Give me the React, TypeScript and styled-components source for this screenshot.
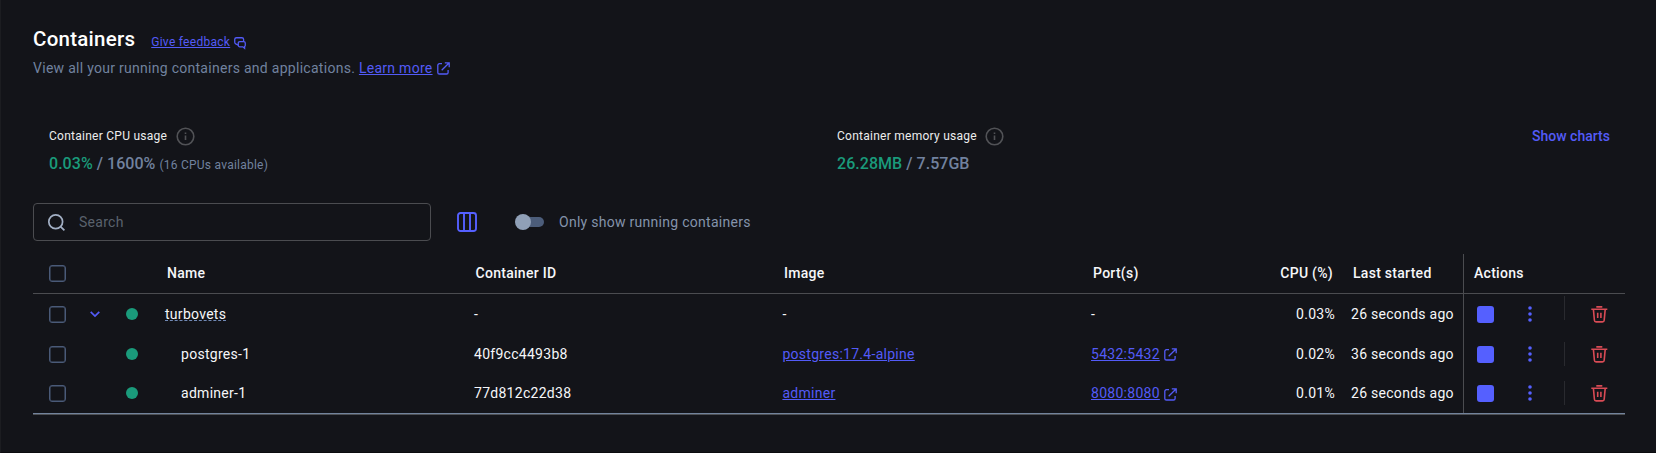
import React from "react";
import styled, { createGlobalStyle, css } from "styled-components";

const c = {
  bg: "#131419",
  text: "#f6f7f9",
  muted: "#71829f",
  label: "#8493ab",
  link: "#535bf7",
  green: "#1a9b7b",
  line: "#4b4c50",
  box: "#4a5a78",
  red: "#d94b55",
};

const Global = createGlobalStyle`
  * { box-sizing: border-box; }
  html, body { margin: 0; background: ${c.bg}; }
  body { font-family: Roboto, "Liberation Sans", sans-serif; font-size: 14px; color: ${c.text}; overflow: hidden; }
`;

const Page = styled.main`
  width: 1656px;
  height: 453px;
  padding: 27px 31px 0 32px;
  background: ${c.bg};
  border-left: 1px solid #1c1d21;
  border-bottom: 1px solid #0b0b0f;
`;

const TitleRow = styled.header`
  display: flex;
  align-items: baseline;
  height: 28px;
  line-height: 24px;
`;

const Title = styled.h1`
  margin: 0 16px 0 0;
  font-size: 20.5px;
  font-weight: 500;
  letter-spacing: 0.25px;
  color: #fff;
`;

const Link = styled.a<{ $size?: number }>`
  font-size: ${(p) => p.$size ?? 14}px;
  letter-spacing: 0.28px;
  color: ${c.link};
  text-decoration: underline;
  text-underline-offset: 1px;
  text-decoration-thickness: 1px;
`;

const Icon = styled.svg<{ $l?: number; $t?: number }>`
  display: block;
  flex: none;
  overflow: visible;
  margin-left: ${(p) => p.$l ?? 0}px;
  margin-top: ${(p) => p.$t ?? 0}px;
  fill: none;
  stroke: currentColor;
`;

const LinkIcon = styled(Icon)`
  align-self: center;
  color: ${c.link};
`;

const Subtitle = styled.div`
  display: flex;
  height: 26px;
  line-height: 26px;
  color: ${c.muted};
  letter-spacing: 0.28px;
  white-space: pre;
`;

const Stats = styled.section`
  display: flex;
  height: 80px;
  margin-top: 42px;
  padding-left: 16px;
`;

const Stat = styled.div`
  width: 788px;
`;

const StatLabel = styled.div`
  display: flex;
  align-items: center;
  height: 26px;
  font-size: 12px;
  letter-spacing: 0.26px;
  color: #eceded;
`;

const StatValue = styled.div`
  height: 30px;
  line-height: 30px;
  font-size: 16px;
  font-weight: 500;
  letter-spacing: 0.04px;
  color: ${c.muted};

  b { font-weight: 500; color: ${c.green}; }
  small { font-size: 12px; font-weight: 400; letter-spacing: 0.24px; }
`;

const ShowCharts = styled.button`
  width: 80px;
  height: 26px;
  margin-left: -95px;
  padding: 0;
  border: 0;
  background: none;
  font: 500 14px Roboto, sans-serif;
  letter-spacing: 0.02px;
  text-align: right;
  color: ${c.link};
`;

const Toolbar = styled.div`
  display: flex;
  align-items: center;
  height: 38px;
`;

const SearchBox = styled.label`
  display: flex;
  align-items: center;
  width: 398px;
  height: 38px;
  padding-left: 14.3px;
  border: 1px solid ${c.line};
  border-radius: 4px;
  color: #5a626d;
  letter-spacing: 0.28px;

  svg { color: #a3b0c5; margin-right: 13.7px; }
`;

const Switch = styled.span`
  display: flex;
  align-items: center;
  width: 26px;
  height: 10px;
  margin: 0 15px 0 41px;
  border-radius: 5px;
  background: #4c5d7a;

  &::before {
    content: "";
    flex: none;
    width: 16px;
    height: 16px;
    margin-left: -3px;
    border-radius: 50%;
    background: #90a0b7;
  }
`;

const SwitchLabel = styled.span`
  color: ${c.label};
  letter-spacing: 0.28px;
`;

const Table = styled.div`
  margin-top: 13px;
  width: 1592px;
  border-bottom: 1px solid #4e5054;
`;

const Row = styled.div<{ $head?: boolean; $last?: boolean }>`
  display: grid;
  grid-template-columns: 57px 36px 39px 309px 308px 309px 185px 75px 112px 1fr;
  height: 40px;
  letter-spacing: 0.28px;
  ${(p) => p.$head && css`font-weight: 500; border-bottom: 1px solid ${c.line};`}
  ${(p) => p.$last && css`border-bottom: 1px solid #72839c;`}
`;

const Cell = styled.div<{ $pad?: number; $right?: number }>`
  display: flex;
  align-items: center;
  min-width: 0;
  white-space: nowrap;
  padding-left: ${(p) => p.$pad ?? 0}px;
  ${(p) => p.$right !== undefined && css`justify-content: flex-end; padding-right: ${p.$right}px;`}

  ${Row}:first-child > &, ${Row}:last-child > & { padding-bottom: 1px; }
`;

const Actions = styled(Cell)`
  border-left: 1px solid ${c.line};
`;

const Checkbox = styled.span`
  width: 17px;
  height: 17px;
  border: 1px solid ${c.box};
  box-shadow: inset 0 0 0 0.5px ${c.box};
  border-radius: 3px;
`;

const Dot = styled.span`
  width: 12px;
  height: 12px;
  border-radius: 50%;
  background: ${c.green};
`;

const Stack = styled.span`
  height: 14px;
  line-height: 14px;
  border-bottom: 1px dashed #7189b5;
`;

const Stop = styled.span`
  width: 17px;
  height: 17px;
  border-radius: 3px;
  background: #5560ff;
`;

const Separator = styled.span<{ $up?: boolean }>`
  width: 1px;
  height: 24px;
  margin: 0 26px 0 32px;
  transform: translateY(${(p) => (p.$up ? -6 : 0)}px);
  background: #292a2f;
`;

const External = ({ l = 4, t = 0 }: { l?: number; t?: number }) => (
  <LinkIcon $l={l} $t={t} width="13" height="13" viewBox="0 0 13 13" strokeWidth="1.3">
    <path d="M5 1.7H2.4A1.6 1.6 0 0 0 .8 3.3v7.1A1.6 1.6 0 0 0 2.4 12h7.1a1.6 1.6 0 0 0 1.6-1.6V8M7.8.8h4.4v4.4M12 1 4.7 8.3" />
  </LinkIcon>
);

const Info = () => (
  <Icon $l={8.5} width="19" height="19" viewBox="0 0 19 19" color="#515256" strokeWidth="1.6">
    <circle cx="9.5" cy="9.5" r="8.3" />
    <path d="M9.5 8.5v4.6M9.5 5.6v1.5" />
  </Icon>
);

const Trash = () => (
  <Icon width="17" height="17" viewBox="0 0 17 17" color={c.red} strokeWidth="1.6">
    <path d="M5.3.9h6M.3 3.2h16M2.4 3.4l1 10.9a1.7 1.7 0 0 0 1.7 1.6h6.4a1.7 1.7 0 0 0 1.7-1.6l1-10.9M6.7 6.8V12M9.9 6.8V12" />
  </Icon>
);

const Dots = () => (
  <Icon $l={34} width="4" height="16" viewBox="0 0 4 16">
    <g fill="#5560ff" stroke="none">
      <circle cx="2" cy="2" r="1.8" />
      <circle cx="2" cy="8" r="1.8" />
      <circle cx="2" cy="14" r="1.8" />
    </g>
  </Icon>
);

type Item = { name: string; id: string; image: string; port: string; cpu: string; started: string };

const items: Item[] = [
  { name: "turbovets", id: "-", image: "-", port: "-", cpu: "0.03%", started: "26 seconds ago" },
  { name: "postgres-1", id: "40f9cc4493b8", image: "postgres:17.4-alpine", port: "5432:5432", cpu: "0.02%", started: "36 seconds ago" },
  { name: "adminer-1", id: "77d812c22d38", image: "adminer", port: "8080:8080", cpu: "0.01%", started: "26 seconds ago" },
];

export default function App() {
  return (
    <Page>
      <Global />
      <TitleRow>
        <Title>Containers</Title>
        <Link $size={12}>Give feedback</Link>
        <LinkIcon $l={4} $t={4} width="12" height="12" viewBox="0 0 13 13" strokeWidth="1.4">
          <path d="M4.6 8.5H4L1.9 7.5A2.2 2.2 0 0 1 .8 5.6V2.6A1.9 1.9 0 0 1 2.7.8h5.8a1.9 1.9 0 0 1 1.9 1.8v2" />
          <path d="M6.3 4.9h4.2a1.7 1.7 0 0 1 1.7 1.7v2.3a1.7 1.7 0 0 1-.7 1.4v2L9.6 10.6H6.3a1.7 1.7 0 0 1-1.7-1.7V6.6a1.7 1.7 0 0 1 1.7-1.7Z" />
        </LinkIcon>
      </TitleRow>
      <Subtitle>
        {"View all your running containers and applications. "}
        <Link>Learn more</Link>
        <External />
      </Subtitle>

      <Stats>
        <Stat>
          <StatLabel>Container CPU usage<Info /></StatLabel>
          <StatValue><b>0.03%</b> / 1600% <small>(16 CPUs available)</small></StatValue>
        </Stat>
        <Stat>
          <StatLabel>Container memory usage<Info /></StatLabel>
          <StatValue><b>26.28MB</b> / 7.57GB</StatValue>
        </Stat>
        <ShowCharts>Show charts</ShowCharts>
      </Stats>

      <Toolbar>
        <SearchBox>
          <Icon width="17" height="17" viewBox="0 0 17 17" strokeWidth="1.7">
            <circle cx="7.7" cy="7.7" r="6.9" />
            <path d="m12.6 12.6 3.8 3.8" />
          </Icon>
          Search
        </SearchBox>
        <Icon $l={26} width="20" height="20" viewBox="0 0 20 20" color="#5560ff" strokeWidth="1.9">
          <rect x="1" y="1" width="18" height="18" rx="2.5" />
          <path d="M7 1v18M13 1v18" />
        </Icon>
        <Switch />
        <SwitchLabel>Only show running containers</SwitchLabel>
      </Toolbar>

      <Table>
        <Row $head>
          <Cell $pad={16.4}><Checkbox /></Cell>
          <Cell />
          <Cell />
          <Cell $pad={2}>Name</Cell>
          <Cell $pad={1.5}>Container ID</Cell>
          <Cell $pad={2}>Image</Cell>
          <Cell $pad={2}>Port(s)</Cell>
          <Cell $right={18}>CPU (%)</Cell>
          <Cell $pad={2}>Last started</Cell>
          <Actions $pad={10}>Actions</Actions>
        </Row>
        {items.map((it, i) => (
          <Row key={it.name} $last={i === 2}>
            <Cell $pad={16.4}><Checkbox /></Cell>
            <Cell>
              {i === 0 && (
                <Icon width="10" height="6" viewBox="0 0 10 6" color={c.link} strokeWidth="1.7">
                  <path d="m.7.8 4.3 4.2L9.3.8" />
                </Icon>
              )}
            </Cell>
            <Cell><Dot /></Cell>
            <Cell $pad={i ? 16 : 0}>{i ? it.name : <Stack>{it.name}</Stack>}</Cell>
            <Cell>{it.id}</Cell>
            <Cell $pad={0.4}>{i ? <Link>{it.image}</Link> : it.image}</Cell>
            <Cell>{i ? <><Link>{it.port}</Link><External l={4.5} t={i === 2 ? 3 : 1} /></> : it.port}</Cell>
            <Cell $right={16}>{it.cpu}</Cell>
            <Cell>{it.started}</Cell>
            <Actions $pad={13.4}>
              <Stop />
              <Dots />
              <Separator $up={i === 0} />
              <Trash />
            </Actions>
          </Row>
        ))}
      </Table>
    </Page>
  );
}
